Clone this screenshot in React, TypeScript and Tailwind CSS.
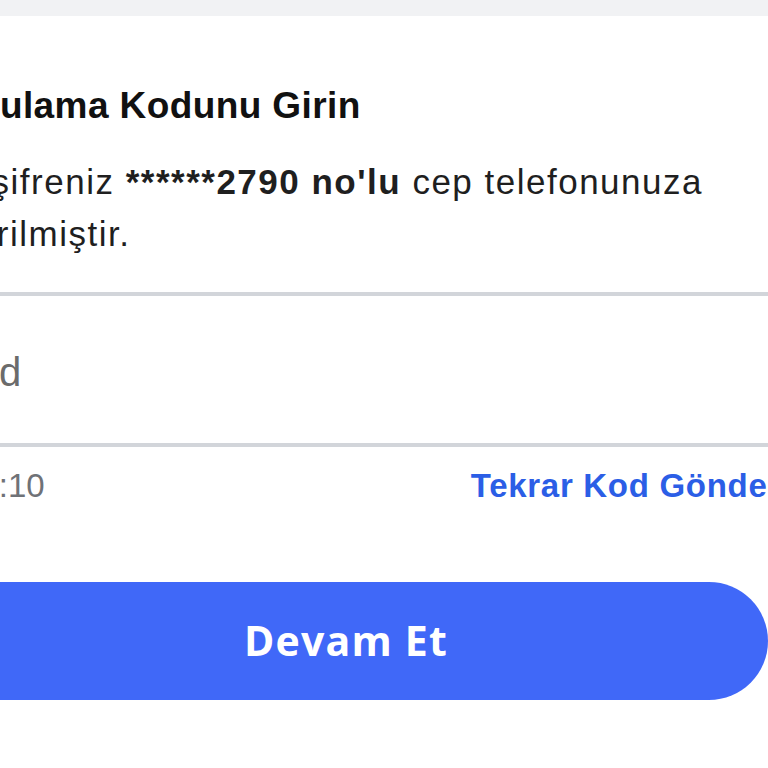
import React, { useState } from 'react';

const body = { fontFamily: '"Liberation Sans", Arial, sans-serif' };

const App: React.FC = () => {
  const [code, setCode] = useState('');
  const seconds = 10;

  return (
    <div className="w-[768px] h-[768px] overflow-hidden bg-white" style={body}>
      {/* top strip of the page behind the card */}
      <div className="h-4 bg-[#f1f2f4]"></div>

      <div className="-ml-[88px] w-[856px]">
        <h2 className="pt-[67px] text-[37px] leading-[46px] font-bold text-[#111] tracking-[0.4px]">
          Doğrulama Kodunu Girin
        </h2>

        <p className="mt-[27px] -ml-[12px] text-[35px] leading-[52px] text-[#1f1f1f] tracking-[1.5px]">
          SMS şifreniz <span className="font-bold">******2790 no'lu</span> cep telefonunuza
          <span className="block -ml-[8px]">gönderilmiştir.</span>
        </p>

        <div className="mt-[32px] border-y-4 border-[#d2d5da] h-[155px] flex items-center">
          <input
            value={code}
            onChange={(e) => setCode(e.target.value)}
            placeholder="Kod"
            className="w-full pl-[38px] pt-[4px] bg-transparent outline-none text-[40px] text-[#222] placeholder:text-[#6b6b6b]"
            style={body}
          />
        </div>

        <div className="pt-[20px] flex items-center justify-between">
          <span className="pl-[50px] text-[33px] leading-[38px] text-[#6f7277]">
            00:{seconds.toString().padStart(2, '0')}
          </span>
          <button className="-mr-[13px] text-[33px] leading-[38px] font-bold text-[#2b5ee6] tracking-[0.7px]" style={body}>
            Tekrar Kod Gönder
          </button>
        </div>

        <button
          className="mt-[77px] w-[856px] h-[118px] pl-[12px] rounded-full bg-[#4068f8] text-white text-[41px] font-bold tracking-[1.2px]"
          style={{ fontFamily: '"Open Sans", sans-serif' }}
        >
          Devam Et
        </button>
      </div>
    </div>
  );
};

export default App;
